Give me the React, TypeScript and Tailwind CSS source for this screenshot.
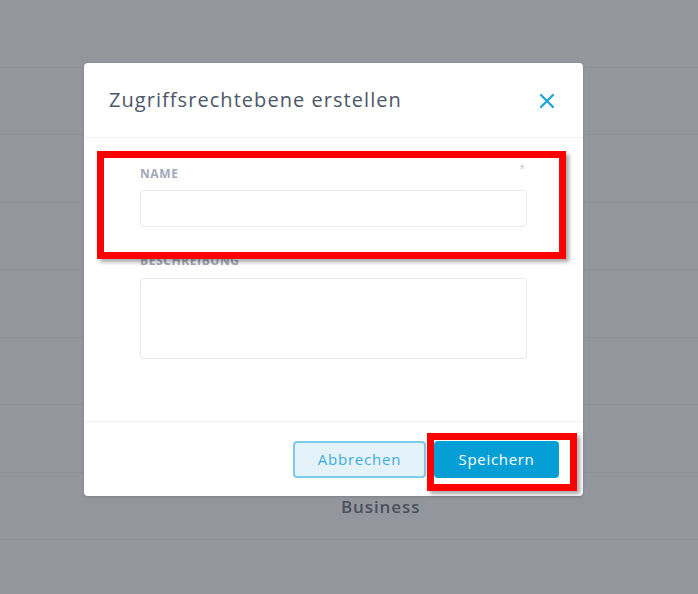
import React from "react";

const rows = [0, 1, 2, 3, 4, 5, 6, 7];

export default function App() {
  return (
    <div
      className="relative w-[698px] h-[594px] overflow-hidden bg-[#94969e]"
      style={{ fontFamily: '"Open Sans", "Noto Sans", sans-serif' }}
    >
      {/* background page content */}
      <div className="flex flex-col">
        {rows.map((i) => (
          <div key={i} className="h-[67.5px] border-b border-[#8f9199]">
            {i === 7 && (
              <div className="pl-[341px] pt-[22px] text-[17px] font-semibold tracking-[0.9px] text-[#4b505c] leading-[24px]">
                Business
              </div>
            )}
          </div>
        ))}
      </div>

      {/* dialog */}
      <div className="absolute left-[84px] top-[63px] w-[499px] h-[433px] bg-white rounded-[4px] flex flex-col shadow-[0_1px_3px_rgba(0,0,0,0.15)]">
        <div className="h-[75px] flex items-center justify-between pl-[25px] pr-[28px] border-b border-[#f0f1f3]">
          <div className="text-[20px] font-medium text-[#4d576a] tracking-[1.05px]">
            Zugriffsrechtebene erstellen
          </div>
          <svg width="16" height="16" viewBox="0 0 16 16" className="mt-[1px]">
            <path d="M2 2 L14 14 M14 2 L2 14" stroke="#1aa3d9" strokeWidth="2.2" strokeLinecap="round" />
          </svg>
        </div>
        <div className="flex-1 px-[56px] pt-[29px] flex flex-col">
          <div className="flex justify-between items-start h-[14px]">
            <span className="text-[12px] font-bold tracking-[0.6px] text-[#a1a9bb] leading-[14px]">NAME</span>
            <span className="text-[10px] text-[#c4c9d4] leading-[10px] -mt-[4px] pr-[2px]">*</span>
          </div>
          <div className="mt-[9px] h-[37px] rounded-[4px] border border-[#e7e9ee] bg-white" />
          <div className="mt-[27px] text-[12px] font-bold tracking-[0.6px] text-[#a1a9bb] leading-[14px]">
            BESCHREIBUNG
          </div>
          <div className="mt-[10px] h-[81px] rounded-[4px] border border-[#e7e9ee] bg-white" />
        </div>
        <div className="h-[75px] border-t border-[#f0f1f3] flex items-center justify-end gap-[8px] pr-[24px]">
          <button className="w-[133px] h-[37px] rounded-[4px] border-2 border-[#7ccbea] bg-[#e4f3fa] text-[15px] tracking-[0.8px] text-[#3fabdc]">
            Abbrechen
          </button>
          <button className="w-[125px] h-[37px] rounded-[4px] bg-[#069fd5] text-[15px] tracking-[0.7px] text-white">
            Speichern
          </button>
        </div>
      </div>

      {/* red annotation boxes */}
      <div className="absolute left-[97px] top-[151px] w-[469px] h-[108px] border-[7px] border-[#ff0000] shadow-[3px_3px_4px_rgba(0,0,0,0.35)]" />
      <div className="absolute left-[427px] top-[433px] w-[150px] h-[58px] border-[7px] border-[#ff0000] shadow-[3px_3px_4px_rgba(0,0,0,0.35)]" />
    </div>
  );
}
